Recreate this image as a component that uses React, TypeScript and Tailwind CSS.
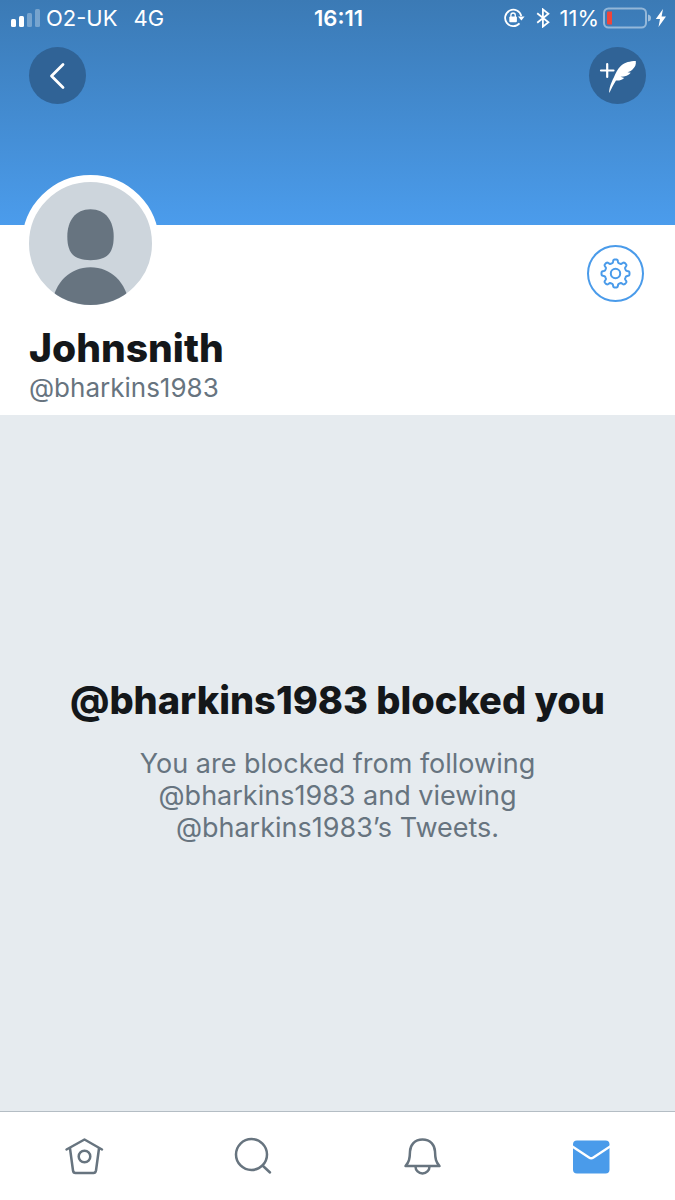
import type { ReactNode } from 'react'

const MUTED = '#67747f'
const BLUE = '#4a9bea'

// outline of a cog with eight soft teeth, centred on 0,0
function gearPath(inner: number, outer: number) {
  const mid = (inner + outer) / 2
  const amp = (outer - inner) / 2
  const points: string[] = []
  for (let i = 0; i < 240; i++) {
    const a = (i / 240) * Math.PI * 2
    const r = mid + (amp * Math.tanh(2.4 * Math.cos(8 * a))) / Math.tanh(2.4)
    points.push(`${(r * Math.cos(a)).toFixed(2)} ${(r * Math.sin(a)).toFixed(2)}`)
  }
  return `M${points.join('L')}Z`
}

function StatusBar() {
  return (
    <div className="grid grid-cols-[1fr_auto_1fr] items-center h-9 pl-[10px] pr-2 text-[22px] leading-9 text-white">
      <div className="flex items-center">
        <svg width="32" height="20" viewBox="0 0 32 20" fill="#fff" aria-hidden="true">
          <rect x="1" y="11" width="5" height="8" rx="1.5" />
          <rect x="9" y="8" width="5" height="11" rx="1.5" />
          <rect x="17" y="5" width="5" height="14" rx="1.5" opacity="0.3" />
          <rect x="25" y="1" width="5" height="18" rx="1.5" opacity="0.3" />
        </svg>
        <span className="ml-1">O2-UK</span>
        <span className="ml-4">4G</span>
      </div>
      <span className="font-semibold">16:11</span>
      <div className="flex items-center justify-end">
        <svg width="22" height="20" viewBox="0 0 22 20" fill="none" stroke="#fff" strokeWidth="1.8" aria-hidden="true">
          <path d="M15.5 15.3A8.2 8.2 0 1 1 17.3 8" />
          <path d="M14 8.6h6.6L17.4 12.4Z" fill="#fff" stroke="none" />
          <rect x="5.3" y="8.6" width="7.6" height="5.6" rx="1" fill="#fff" stroke="none" />
          <path d="M6.9 9V7.2a2.2 2.2 0 0 1 4.4 0V9" strokeWidth="1.3" />
        </svg>
        <svg className="ml-[10px]" width="14" height="20" viewBox="0 0 14 20" fill="none" stroke="#fff" strokeWidth="1.8" aria-hidden="true">
          <path d="M1.2 5.2L12.4 14.2L6.9 18.6V1.4L12.4 5.8L1.2 14.8" />
        </svg>
        <span className="ml-[10px]">11%</span>
        <svg className="ml-1" width="48" height="22" viewBox="0 0 48 22" fill="none" aria-hidden="true">
          <rect x="1" y="1.5" width="42" height="19" rx="4.5" stroke="#fff" strokeOpacity="0.45" strokeWidth="2" />
          <path d="M4 5.5a1 1 0 0 1 1-1H9v13H5a1 1 0 0 1-1-1Z" fill="#f0453a" />
          <path d="M45 7.5Q48 8 48 11T45 14.5Z" fill="#fff" fillOpacity="0.5" />
        </svg>
        <svg className="ml-1" width="12" height="18" viewBox="0 0 12 18" fill="#fff" aria-hidden="true">
          <path d="M8 0L0.8 10H5L3.5 18L11 7.5H6.6Z" />
        </svg>
      </div>
    </div>
  )
}

function RoundButton({ label, children }: { label: string; children: ReactNode }) {
  return (
    <button
      type="button"
      aria-label={label}
      className="flex size-[57px] items-center justify-center rounded-full bg-[#306396]"
    >
      {children}
    </button>
  )
}

function Avatar() {
  return (
    <div className="-mt-[50px] -ml-[7px] size-[137px] overflow-hidden rounded-full border-[7px] border-white bg-[#cdd5dc]">
      <svg viewBox="0 0 122 122" className="size-full" fill="#677480" role="img" aria-label="Profile picture">
        <path d="M61 27C76 27 84 38.5 84 54C84 70 78 77.500 61 77.500S38 70 38 54C38 38.5 46 27 61 27Z" />
        <path d="M61 84.500C82 84.500 97 100 100 124H22C25 100 40 84.500 61 84.500Z" />
      </svg>
    </div>
  )
}

function TabBar() {
  const tabs = [
    {
      label: 'Home',
      icon: (
        <g fill="none" stroke={MUTED} strokeWidth="2.5" strokeLinecap="round" strokeLinejoin="round">
          <path d="M2.500 13.5L20.500 3.5L38 13.5" />
          <path d="M6 12.5L9 34.5Q9.3 37 11.500 37H29.500Q31.500 37 32 34.5L35 12.5" />
          <circle cx="20.500" cy="20.500" r="5.8" />
        </g>
      ),
    },
    {
      label: 'Search',
      icon: (
        <g fill="none" stroke={MUTED} strokeWidth="2.5" strokeLinecap="round">
          <circle cx="18.5" cy="18.5" r="15.500" />
          <path d="M29.500 29.500L37 36.5" />
        </g>
      ),
    },
    {
      label: 'Notifications',
      icon: (
        <g fill="none" stroke={MUTED} strokeWidth="2.5" strokeLinejoin="round">
          <path d="M20.500 3.5C28.5 3.5 32.8 9 33 15.5C33.2 23 34 26 37.500 30H3.5C7 26 7.800 23 8 15.5C8.200 9 12.5 3.500 20.500 3.500Z" />
          <path d="M13.500 30.500A7 7 0 0 0 27.500 30.500" />
        </g>
      ),
    },
    {
      label: 'Messages',
      icon: (
        <g>
          <rect x="2" y="4.500" width="36.5" height="33" rx="4" fill={BLUE} />
          <path d="M1 10.2L18 21.500Q20.200 23 22.400 21.500L39.500 10.2" fill="none" stroke="#fff" strokeWidth="2.4" />
        </g>
      ),
    },
  ]

  return (
    <nav className="grid h-[89px] grid-cols-4 border-t border-[#b4bdc4] bg-white">
      {tabs.map((tab) => (
        <a key={tab.label} href="#" aria-label={tab.label} className="flex items-center justify-center">
          <svg width="40" height="40" viewBox="0 0 40 40" aria-hidden="true">
            {tab.icon}
          </svg>
        </a>
      ))}
    </nav>
  )
}

export default function App() {
  return (
    <div className="flex min-h-screen flex-col bg-[#e6ebef] font-[Inter,sans-serif] antialiased">
      <header className="h-[225px] bg-linear-to-b from-[#3b7ab5] to-[#4b9cec]">
        <StatusBar />
        <div className="flex justify-between px-[29px] pt-[11px]">
          <RoundButton label="Back">
            <svg width="20" height="30" viewBox="0 0 20 30" fill="none" stroke="#fff" strokeWidth="2.8" strokeLinecap="round" strokeLinejoin="round" aria-hidden="true">
              <path d="M15 3.5L3.5 15L15 26.5" />
            </svg>
          </RoundButton>
          <RoundButton label="New Tweet">
            <svg width="40" height="36" viewBox="0 0 40 36" aria-hidden="true">
              <path d="M3 12.5H15.5M9.2 6V19" stroke="#fff" strokeWidth="2.2" strokeLinecap="round" />
              <path d="M11.3 35C10.8 31 13 25 15.8 19.5C18 14.500 19.500 11 23 7.8C27 4.2 32 3.200 37.8 3C38.200 6.500 37.200 9 34.500 11.500C33 13 31.500 13.800 29.500 14.300L32.800 14.700C30.500 17.500 27.500 18.500 22.500 18.800L26.200 20C23.500 22.500 20.500 22.800 18 22.500C15.500 26.500 13.500 30.500 11.300 35Z" fill="#fff" />
            </svg>
          </RoundButton>
        </div>
      </header>

      <section className="bg-white px-[29px] pb-[9px]">
        <div className="flex items-start justify-between">
          <Avatar />
          <button
            type="button"
            aria-label="Settings"
            className="mt-5 mr-[2px] flex size-[57px] items-center justify-center rounded-full border-2 border-[#4a9bea]"
          >
            <svg width="33" height="33" viewBox="-16.5 -16.5 33 33" fill="none" stroke={BLUE} strokeWidth="2" strokeLinejoin="round" aria-hidden="true">
              <path d={gearPath(10.8, 14)} />
              <circle r="4.7" />
            </svg>
          </button>
        </div>
        <h1 className="mt-[14px] text-[39px] leading-[44px] font-extrabold text-[#14171a]">Johnsnith</h1>
        <p className="text-[26px] leading-9 text-[#67747f]">@bharkins1983</p>
      </section>

      <main className="flex flex-1 flex-col items-center justify-center px-8 pb-[6px] text-center">
        <h2 className="text-[38px] leading-[48px] font-extrabold text-[#14171a]">@bharkins1983 blocked you</h2>
        <p className="mt-6 max-w-[440px] text-[27px] leading-8 text-[#67747f]">
          You are blocked from following @bharkins1983 and viewing @bharkins1983’s Tweets.
        </p>
      </main>

      <TabBar />
    </div>
  )
}
